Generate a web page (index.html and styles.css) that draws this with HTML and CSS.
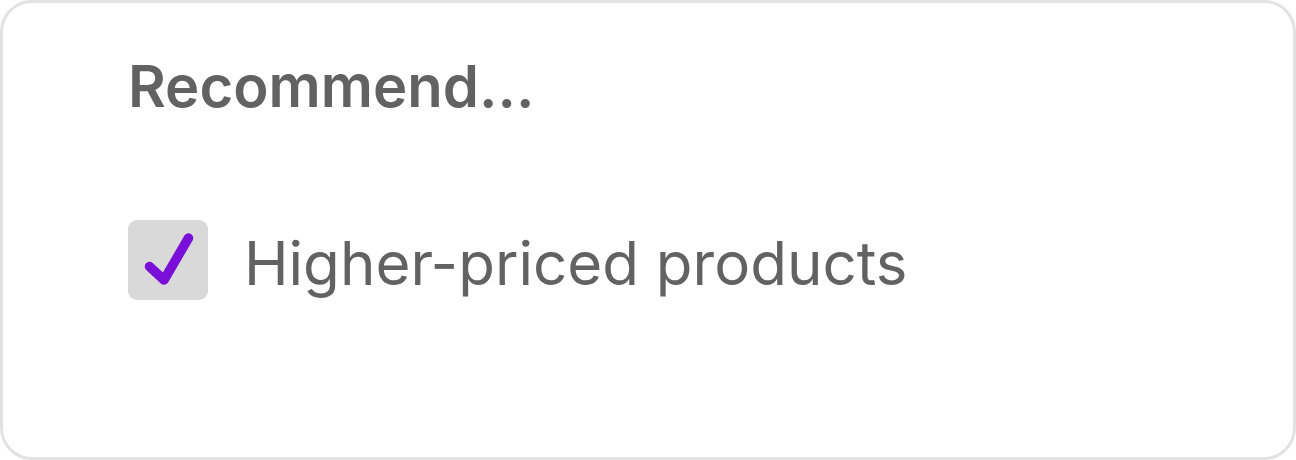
FILE: index.html
```html
<!DOCTYPE html>
<html>
<head>
<meta charset="utf-8">
<link rel="stylesheet" href="styles.css">
</head>
<body>
<div class="card">
  <h2 class="title">Recommend...</h2>
  <label class="option">
    <span class="box">
      <svg width="80" height="80" viewBox="0 0 80 80"><path d="M21.5 46.5 L36 60 L60.5 18" fill="none" stroke="#7a10d8" stroke-width="9.5" stroke-linecap="round" stroke-linejoin="round"/></svg>
    </span>
    <span class="text">Higher-priced products</span>
  </label>
</div>
</body>
</html>
```
FILE: styles.css
```css
html, body { margin: 0; padding: 0; background: #ffffff; }
.card {
  box-sizing: border-box;
  width: 1296px;
  height: 460px;
  border: 3px solid #e2e2e2;
  border-radius: 32px;
  background: #fff;
  padding: 47px 0 0 125px;
  font-family: Inter, "Noto Sans", sans-serif;
  color: #626262;
}
.title {
  margin: 0;
  font-size: 58px;
  font-weight: 600;
  line-height: 72px;
  letter-spacing: 0;
}
.option {
  display: flex;
  align-items: center;
  gap: 36px;
  margin-top: 95px;
}
.box {
  width: 80px;
  height: 80px;
  border-radius: 9px;
  background: #d9d9d9;
  display: block;
  flex: none;
}
.box svg { display: block; }
.text {
  font-size: 60px;
  font-weight: 400;
  line-height: 80px;
  padding-top: 6px;
  letter-spacing: 0;
}
```
